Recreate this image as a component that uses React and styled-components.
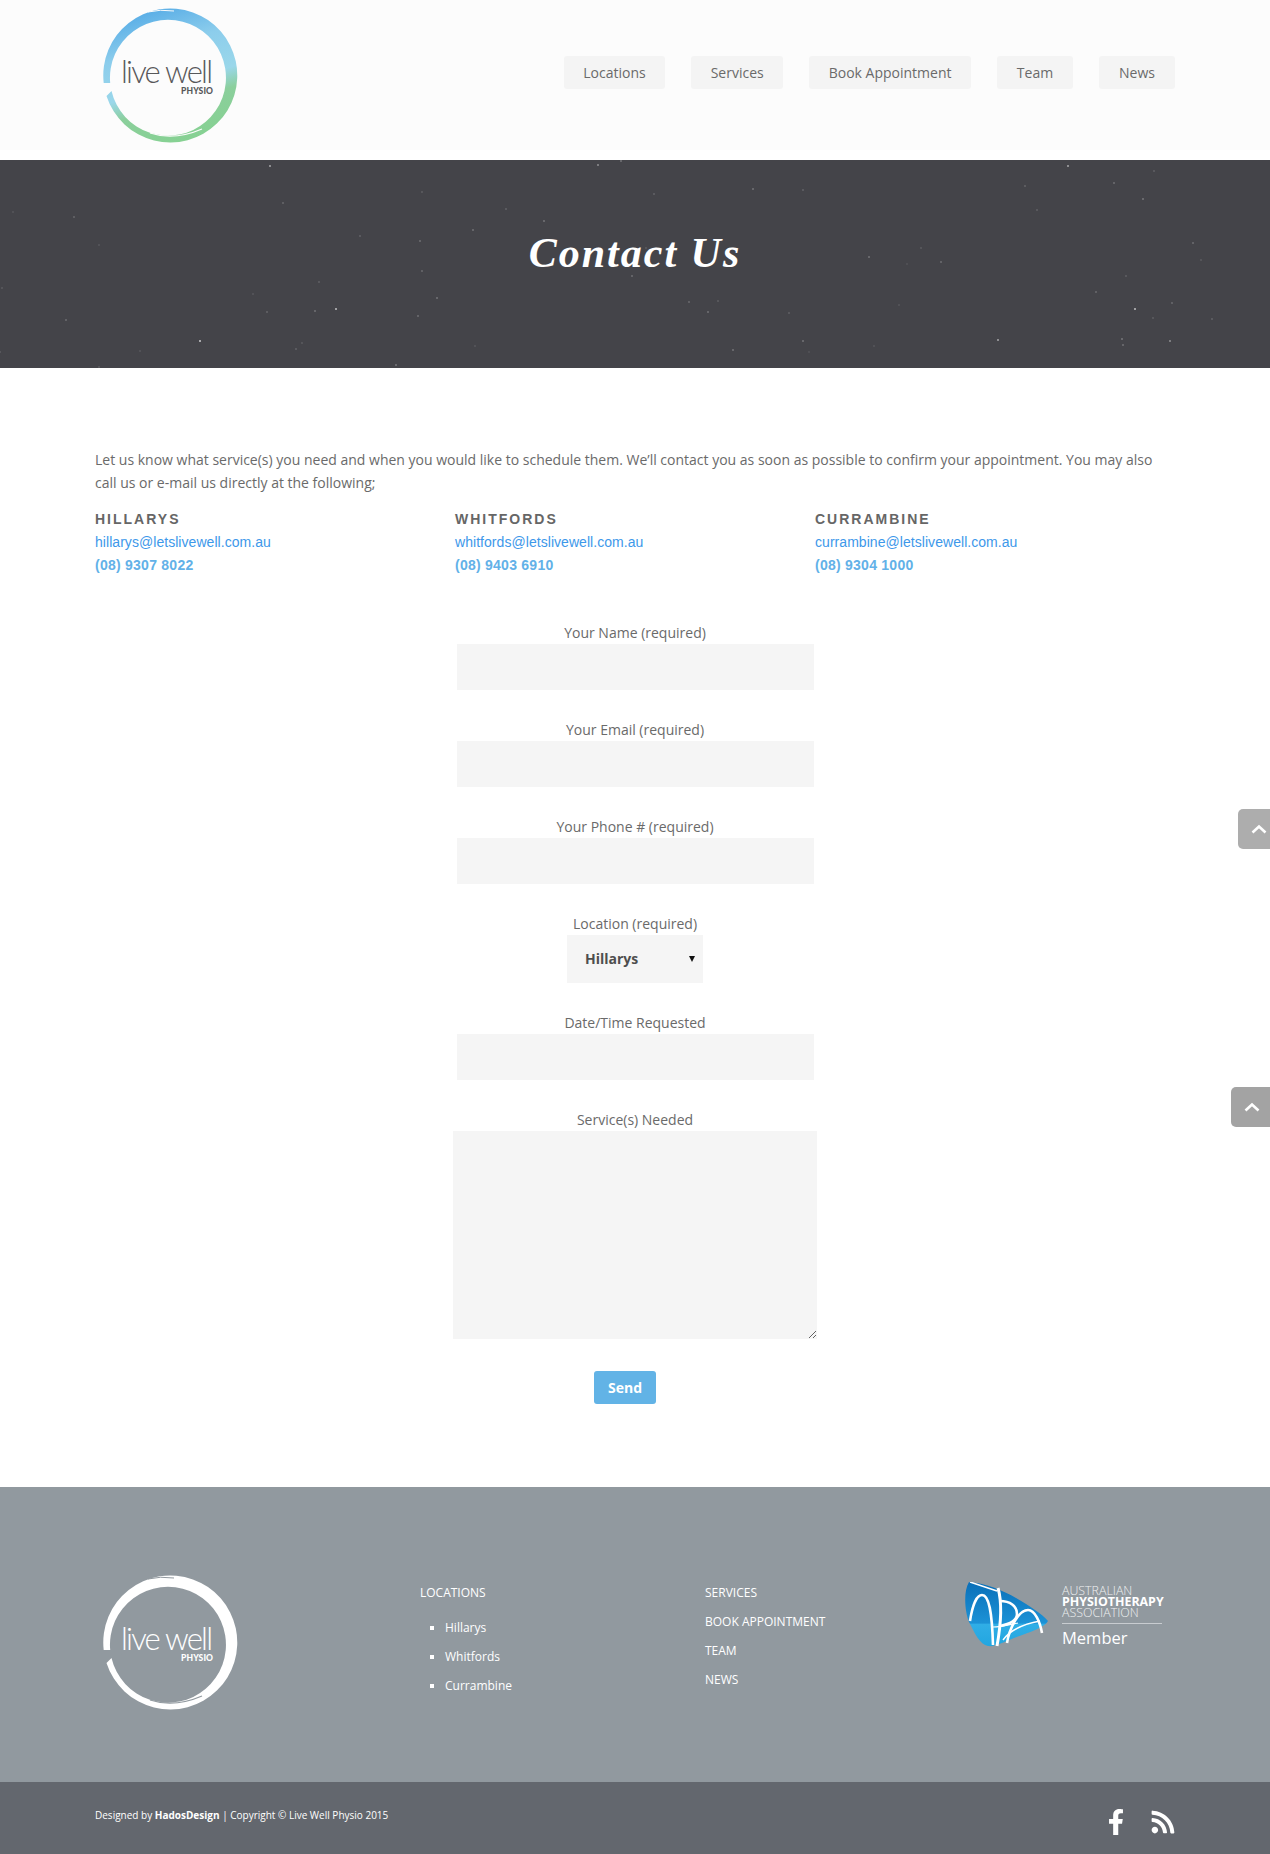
import React from 'react'
import styled, {createGlobalStyle} from 'styled-components'
import {FaFacebookF, FaRss} from 'react-icons/fa'

const GlobalStyle = createGlobalStyle`
html, body {
    margin: 0;
    padding: 0;
    background: #fff;
}
body {
    font-family: "Open Sans", "Liberation Sans", sans-serif;
    font-size: 14px;
    color: #6a6a6a;
}
* {
    box-sizing: border-box;
}
`

// scatter of faint specks for the hero background
let seed = 7
const rnd = () => {
    seed = (seed * 16807) % 2147483647
    return seed / 2147483647
}
const specks = [[336, 149, .5], [1135, 149, .5], [200, 181, .55], [270, 6, .4], [1068, 6, .4], [998, 180, .4], [598, 5, .3], [1170, 181, .3]]
for (let i = 0; i < 60; i++) {
    specks.push([Math.round(rnd() * 1270), Math.round(rnd() * 208), .06 + rnd() * .14])
}
const speckBg = specks
    .map(([x, y, a]) => `radial-gradient(circle at ${x}px ${y}px, rgba(255,255,255,${a.toFixed(2)}) 0.7px, transparent 1.3px)`)
    .join(',')

const Page = styled('div')`
position: relative;
width: 1270px;
height: 1854px;
overflow: hidden;
`

const Header = styled('header')`
display: flex;
align-items: center;
justify-content: space-between;
height: 150px;
margin-bottom: 10px;
padding: 0 95px 0 102px;
background: #fcfcfc;
`

const Nav = styled('nav')`
display: flex;
gap: 26px;
margin-bottom: 5px;
`

const NavItem = styled('a')`
display: block;
min-width: 76px;
height: 33px;
padding: 0 19.5px;
line-height: 33px;
text-align: center;
font-size: 14px;
color: #6a6a6a;
background: #f4f4f4;
border-radius: 3px;
`

const Hero = styled('section')`
display: flex;
align-items: center;
justify-content: center;
height: 208px;
padding-bottom: 22px;
background-color: #444449;
background-image: ${speckBg};
`

const HeroTitle = styled('h1')`
margin: 0;
font-family: "Liberation Serif", serif;
font-style: italic;
font-weight: bold;
font-size: 42px;
letter-spacing: 2px;
color: #fff;
`

const Main = styled('main')`
padding: 80px 95px 83px;
`

const Intro = styled('p')`
margin: 0 0 13px;
line-height: 23px;
`

const Columns = styled('div')`
display: grid;
grid-template-columns: repeat(3, 360px);
`

const ColumnTitle = styled('h4')`
margin: 0;
height: 24px;
font-family: "Liberation Sans", sans-serif;
font-size: 14px;
line-height: 24px;
font-weight: bold;
letter-spacing: 2px;
color: #666;
`

const Email = styled('a')`
display: block;
font-family: "Liberation Sans", sans-serif;
font-size: 14px;
line-height: 23px;
letter-spacing: 0.05px;
color: #3d98ea;
`

const Phone = styled('a')`
display: block;
font-family: "Liberation Sans", sans-serif;
font-size: 14px;
line-height: 23px;
font-weight: bold;
letter-spacing: 0.25px;
color: #62b1e8;
`

const Form = styled('form')`
display: flex;
flex-direction: column;
align-items: center;
margin-top: 44px;
`

const Field = styled('div')`
display: flex;
flex-direction: column;
align-items: center;
margin-bottom: 28px;
`

const Label = styled('label')`
display: block;
line-height: 23px;
color: #6a6a6a;
`

const Input = styled('input')`
display: block;
width: 357px;
height: 46px;
border: 0;
padding: 0 16px;
background: #f5f5f5;
`

const SelectWrap = styled('div')`
position: relative;
width: 136px;
height: 48px;
&::after {
    content: '';
    position: absolute;
    right: 8px;
    top: 21px;
    border-left: 3px solid transparent;
    border-right: 3px solid transparent;
    border-top: 6px solid #111;
}
`

const Select = styled('select')`
display: block;
width: 100%;
height: 100%;
border: 0;
padding: 0 18px 2px;
appearance: none;
font-family: "Open Sans", sans-serif;
font-size: 14px;
font-weight: bold;
color: #4e4e4e;
background: #f5f5f5;
`

const TextArea = styled('textarea')`
display: block;
width: 364px;
height: 208px;
border: 0;
padding: 16px;
background: #f5f5f5;
`

const SendButton = styled('button')`
display: block;
width: 62px;
height: 33px;
margin: 4px 20px 0 0;
border: 0;
border-radius: 3px;
font-family: "Open Sans", sans-serif;
font-size: 14px;
font-weight: bold;
color: #fff;
background: #62b3e6;
`

const Footer = styled('footer')`
display: grid;
grid-template-columns: 318px 285px 259px 1fr;
height: 295px;
padding: 87px 0 0 102px;
color: #fff;
background: #91999f;
`

const FooterColumn = styled('div')`
margin-top: 4px;
font-size: 12px;
line-height: 29px;
`

const FooterHead = styled('div')`
text-transform: uppercase;
`

const FooterList = styled('ul')`
margin: 6px 0 0;
padding: 0 0 0 25px;
list-style: square;
li::marker {
    font-size: 11px;
}
`

const ApaWrap = styled('div')`
display: flex;
gap: 14px;
margin-top: 8px;
`

const ApaText = styled('div')`
width: 100px;
margin-top: 3px;
font-size: 12.4px;
line-height: 11px;
font-weight: 300;
color: #eef0f1;
`

const ApaStrong = styled('div')`
font-weight: bold;
color: #fff;
`

const ApaMember = styled('div')`
margin-top: 5px;
padding-top: 4px;
border-top: 1px solid #c8ccd0;
font-size: 16.5px;
font-weight: 400;
line-height: 20px;
color: #fff;
`

const BottomBar = styled('div')`
display: flex;
align-items: center;
justify-content: space-between;
height: 72px;
padding: 0 94px 0 95px;
color: #fff;
background: #63676e;
`

const Credits = styled('div')`
margin-bottom: 7px;
font-size: 10px;
`

const Social = styled('div')`
display: flex;
align-items: center;
gap: 21px;
margin-top: 8px;
font-size: 26px;
`

const TopButton = styled('a')`
position: absolute;
right: 0;
top: ${props => props.$top}px;
display: flex;
align-items: center;
width: ${props => props.$width}px;
height: 40px;
padding-left: 13px;
background: ${props => props.$color};
border-radius: 5px 0 0 5px;
`

const Chevron = () => (
    <svg width="16" height="10" viewBox="0 0 16 10">
        <polyline points="1.5,8.5 8,2.5 14.5,8.5" fill="none" stroke="#fff" strokeWidth="2.6" />
    </svg>
)

const Logo = ({white, id}) => {
    const ink = white ? '#fff' : '#58585a'
    const back = white ? '#91999f' : '#fcfcfc'
    return (
        <svg width="136" height="136" viewBox="0 0 136 136">
            <defs>
                <linearGradient id={id} x1="0.3" y1="0" x2="0.6" y2="1">
                    <stop offset="0" stopColor={white ? '#fff' : '#55abe6'} />
                    <stop offset="0.3" stopColor={white ? '#fff' : '#8ccdec'} />
                    <stop offset="0.58" stopColor={white ? '#fff' : '#9ad7ea'} />
                    <stop offset="0.72" stopColor={white ? '#fff' : '#8bcf9c'} />
                    <stop offset="1" stopColor={white ? '#fff' : '#86d192'} />
                </linearGradient>
            </defs>
            <path
                d="M4.5 89 A67 67 0 1 0 1.7 76 L8.2 76 A58 58 0 1 1 9.5 84 Z"
                fill={`url(#${id})`}
            />
            <path d="M46 5 Q58 2 72 4" fill="none" stroke={back} strokeWidth="1" />
            <path d="M48 126 Q72 134 100 122" fill="none" stroke={back} strokeWidth="1.2" />
            <path d="M126 30 Q130 36 132 44" fill="none" stroke={back} strokeWidth="1" />
            <text x="19" y="76" fontFamily="Lato, sans-serif" fontWeight="300" fontSize="31" textLength="92" lengthAdjust="spacing" fill={ink}>live well</text>
            <text x="79" y="87" fontFamily="Lato, sans-serif" fontWeight="900" fontSize="8.5" textLength="32" fill={ink}>PHYSIO</text>
        </svg>
    )
}

const ApaLogo = () => (
    <svg width="84" height="66" viewBox="0 0 84 66">
        <defs>
            <linearGradient id="apaBlue" x1="0" y1="0" x2="0" y2="1">
                <stop offset="0" stopColor="#0a6fb8" />
                <stop offset="0.64" stopColor="#1c92d6" />
                <stop offset="0.66" stopColor="#30aee6" />
                <stop offset="1" stopColor="#22a6e0" />
            </linearGradient>
        </defs>
        <path d="M5 0 C22 1 40 9 52 16 C66 24 78 32 84 39 C80 46 66 50 50 56 C40 60 30 65 24 64 C16 63 10 50 5 40 C1 30 -1 10 5 0 Z" fill="url(#apaBlue)" />
        <g fill="none" stroke="#fff" strokeWidth="2.6">
            <path d="M6 0 L33 9" strokeWidth="1.6" />
            <path d="M6 39 C8 26 12 13 18 13 C25 13 28 30 29 63" />
            <path d="M34 6 C38 20 37 42 33 64" strokeWidth="3" />
            <path d="M36 19 C46 19 53 24 53 32 C53 38 46 42 36 44" />
            <path d="M43 61 C45 48 54 28 64 28 C71 28 76 40 78 51" />
            <path d="M39 58 C46 48 60 42 76 39" strokeWidth="1.4" />
            <path d="M29 45 C36 45 44 43 54 41" strokeWidth="1.2" />
        </g>
    </svg>
)

class App extends React.Component {
    render() {
        return (
            <Page>
                <GlobalStyle />
                <Header>
                    <Logo id="logoColor" />
                    <Nav>
                        <NavItem>Locations</NavItem>
                        <NavItem>Services</NavItem>
                        <NavItem>Book Appointment</NavItem>
                        <NavItem>Team</NavItem>
                        <NavItem>News</NavItem>
                    </Nav>
                </Header>
                <Hero>
                    <HeroTitle>Contact Us</HeroTitle>
                </Hero>
                <Main>
                    <Intro>Let us know what service(s) you need and when you would like to schedule them. We’ll contact you as soon as possible to confirm your appointment. You may also call us or e-mail us directly at the following;</Intro>
                    <Columns>
                        <div>
                            <ColumnTitle>HILLARYS</ColumnTitle>
                            <Email>hillarys@letslivewell.com.au</Email>
                            <Phone>(08) 9307 8022</Phone>
                        </div>
                        <div>
                            <ColumnTitle>WHITFORDS</ColumnTitle>
                            <Email>whitfords@letslivewell.com.au</Email>
                            <Phone>(08) 9403 6910</Phone>
                        </div>
                        <div>
                            <ColumnTitle>CURRAMBINE</ColumnTitle>
                            <Email>currambine@letslivewell.com.au</Email>
                            <Phone>(08) 9304 1000</Phone>
                        </div>
                    </Columns>
                    <Form>
                        <Field>
                            <Label>Your Name (required)</Label>
                            <Input type="text" />
                        </Field>
                        <Field>
                            <Label>Your Email (required)</Label>
                            <Input type="text" />
                        </Field>
                        <Field>
                            <Label>Your Phone # (required)</Label>
                            <Input type="text" />
                        </Field>
                        <Field>
                            <Label>Location (required)</Label>
                            <SelectWrap>
                                <Select defaultValue="Hillarys">
                                    <option>Hillarys</option>
                                    <option>Whitfords</option>
                                    <option>Currambine</option>
                                </Select>
                            </SelectWrap>
                        </Field>
                        <Field>
                            <Label>Date/Time Requested</Label>
                            <Input type="text" />
                        </Field>
                        <Field>
                            <Label>Service(s) Needed</Label>
                            <TextArea />
                        </Field>
                        <SendButton type="button">Send</SendButton>
                    </Form>
                </Main>
                <Footer>
                    <Logo white id="logoWhite" />
                    <FooterColumn>
                        <FooterHead>Locations</FooterHead>
                        <FooterList>
                            <li>Hillarys</li>
                            <li>Whitfords</li>
                            <li>Currambine</li>
                        </FooterList>
                    </FooterColumn>
                    <FooterColumn>
                        <FooterHead>Services</FooterHead>
                        <FooterHead>Book Appointment</FooterHead>
                        <FooterHead>Team</FooterHead>
                        <FooterHead>News</FooterHead>
                    </FooterColumn>
                    <ApaWrap>
                        <ApaLogo />
                        <ApaText>
                            <div>AUSTRALIAN</div>
                            <ApaStrong>PHYSIOTHERAPY</ApaStrong>
                            <div>ASSOCIATION</div>
                            <ApaMember>Member</ApaMember>
                        </ApaText>
                    </ApaWrap>
                </Footer>
                <BottomBar>
                    <Credits>Designed by <b>HadosDesign</b> | Copyright © Live Well Physio 2015</Credits>
                    <Social>
                        <FaFacebookF />
                        <FaRss />
                    </Social>
                </BottomBar>
                <TopButton $top={809} $width={32} $color="#adadad"><Chevron /></TopButton>
                <TopButton $top={1087} $width={39} $color="#a3a3a3"><Chevron /></TopButton>
            </Page>
        )
    }
}

export default App
